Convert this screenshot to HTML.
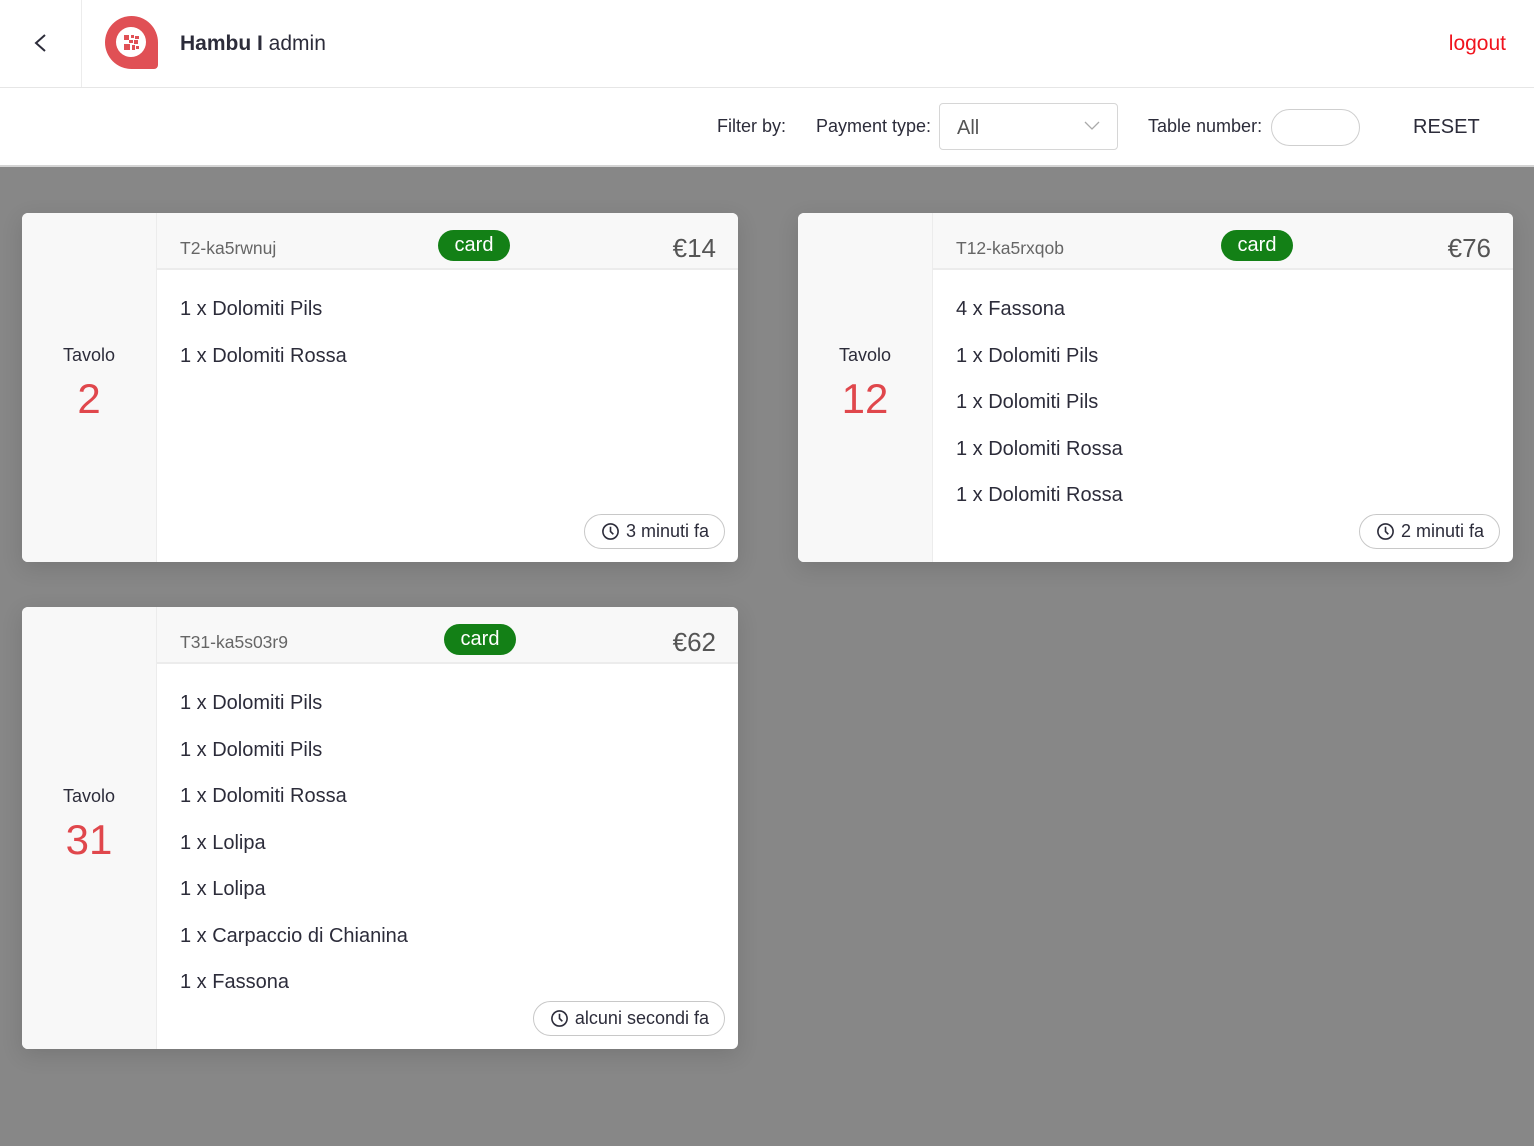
<!DOCTYPE html>
<html><head><meta charset="utf-8"><style>
*{margin:0;padding:0;box-sizing:border-box}
body{width:1534px;height:1146px;background:#878787;font-family:"Liberation Sans",Arial,sans-serif;color:#2c2c3a;position:relative;overflow:hidden}
.top{position:absolute;left:0;top:0;width:1534px;height:88px;background:#fff;border-bottom:1px solid #e6e6e6}
.back{position:absolute;left:0;top:0;width:82px;height:87px;border-right:1px solid #ececec}
.logo{position:absolute;left:105px;top:16px;width:53px;height:53px;background:#e05055;border-radius:50% 50% 4px 50%}
.logo i{position:absolute;left:11px;top:11px;width:30px;height:30px;background:#fff;border-radius:50%}
.title{position:absolute;left:180px;top:32px;font-size:21px;color:#2c2c3a}
.logout{position:absolute;right:28px;top:32px;font-size:21px;color:#f0141e}
.fbar{position:absolute;left:0;top:88px;width:1534px;height:79px;background:#fff;border-bottom:2px solid #d4d4d4}
.lbl{position:absolute;top:28px;font-size:18px;color:#2c2c3a}
.sel{position:absolute;left:939px;top:15px;width:179px;height:47px;border:1px solid #d6d6d6;border-radius:4px}
.sel span{position:absolute;left:17px;top:13px;font-size:20px;color:#555}
.inp{position:absolute;left:1271px;top:21px;width:89px;height:37px;border:1px solid #cfcfcf;border-radius:19px}
.card{position:absolute;background:#fff;border-radius:6px;overflow:hidden;box-shadow:0 6px 22px rgba(0,0,0,.12)}
.lc{position:absolute;left:0;top:0;bottom:0;width:135px;background:#f8f8f8;border-right:1px solid #ececec;display:flex;flex-direction:column;justify-content:center;align-items:center;padding-bottom:8px}
.lc .t{font-size:18px;color:#2c2c3a}
.lc .n{font-size:42px;color:#e0474c;margin-top:10px;line-height:46px}
.hd{position:absolute;left:135px;right:0;top:0;height:57px;background:#f8f8f8;border-bottom:2px solid #ececec}
.hd .id{position:absolute;left:23px;top:25px;font-size:17.5px;color:#666}
.hd .pr{position:absolute;right:22px;top:20px;font-size:26px;color:#555}
.badge{position:absolute;top:17px;width:72px;height:31px;background:#138016;border-radius:16px;color:#fff;font-size:20px;text-align:center;line-height:30px}
.items{position:absolute;left:158px;top:85px;font-size:20px;color:#2c2c3a}
.items div{height:46.5px}
.pill{position:absolute;right:13px;bottom:13px;height:35px;border:1px solid #c8c8c8;border-radius:18px;padding:0 15px 0 16px;font-size:18px;line-height:33px;color:#2c2c3a;display:flex;align-items:center;gap:6px}
</style></head><body>
<div class="top">
 <div class="back"><svg style="position:absolute;left:33px;top:33px" width="14" height="20" viewBox="0 0 14 20"><path d="M12 2 L3 10 L12 18" fill="none" stroke="#2c2c3a" stroke-width="2"/></svg></div>
 <div class="logo"><i></i><svg style="position:absolute;left:19px;top:19px" width="15" height="15" viewBox="0 0 15 15" fill="#e05055"><rect x="0" y="0" width="5" height="5"/><rect x="7" y="0" width="3" height="3"/><rect x="11" y="1" width="4" height="3"/><rect x="5" y="5" width="4" height="3"/><rect x="10" y="5" width="4" height="4"/><rect x="0" y="9" width="6" height="6"/><rect x="8" y="10" width="3" height="5"/><rect x="12" y="11" width="3" height="3"/></svg></div>
 <div class="title"><b>Hambu I</b> admin</div>
 <div class="logout">logout</div>
</div>
<div class="fbar">
 <div class="lbl" style="left:717px">Filter by:</div>
 <div class="lbl" style="left:816px">Payment type:</div>
 <div class="sel"><span>All</span><svg style="position:absolute;left:144px;top:17px" width="16" height="10" viewBox="0 0 16 10"><path d="M1 1 L8 8 L15 1" fill="none" stroke="#aaa" stroke-width="1.3"/></svg></div>
 <div class="lbl" style="left:1148px">Table number:</div>
 <div class="inp"></div>
 <div class="lbl" style="left:1413px;top:28px;font-size:20px">RESET</div>
</div>

<div class="card" style="left:22px;top:213px;width:716px;height:349px">
 <div class="lc"><div class="t">Tavolo</div><div class="n">2</div></div>
 <div class="hd"><div class="id">T2-ka5rwnuj</div><div class="badge" style="left:281px">card</div><div class="pr">€14</div></div>
 <div class="items"><div>1 x Dolomiti Pils</div><div>1 x Dolomiti Rossa</div></div>
 <div class="pill"><svg width="19" height="19" viewBox="0 0 20 20"><circle cx="10" cy="10" r="8" fill="none" stroke="#2c2c3a" stroke-width="1.7"/><path d="M10 5 V10 L13 13" fill="none" stroke="#2c2c3a" stroke-width="1.7"/></svg>3 minuti fa</div>
</div>

<div class="card" style="left:798px;top:213px;width:715px;height:349px">
 <div class="lc"><div class="t">Tavolo</div><div class="n">12</div></div>
 <div class="hd"><div class="id">T12-ka5rxqob</div><div class="badge" style="left:288px">card</div><div class="pr">€76</div></div>
 <div class="items"><div>4 x Fassona</div><div>1 x Dolomiti Pils</div><div>1 x Dolomiti Pils</div><div>1 x Dolomiti Rossa</div><div>1 x Dolomiti Rossa</div></div>
 <div class="pill"><svg width="19" height="19" viewBox="0 0 20 20"><circle cx="10" cy="10" r="8" fill="none" stroke="#2c2c3a" stroke-width="1.7"/><path d="M10 5 V10 L13 13" fill="none" stroke="#2c2c3a" stroke-width="1.7"/></svg>2 minuti fa</div>
</div>

<div class="card" style="left:22px;top:607px;width:716px;height:442px">
 <div class="lc"><div class="t">Tavolo</div><div class="n">31</div></div>
 <div class="hd"><div class="id">T31-ka5s03r9</div><div class="badge" style="left:287px">card</div><div class="pr">€62</div></div>
 <div class="items"><div>1 x Dolomiti Pils</div><div>1 x Dolomiti Pils</div><div>1 x Dolomiti Rossa</div><div>1 x Lolipa</div><div>1 x Lolipa</div><div>1 x Carpaccio di Chianina</div><div>1 x Fassona</div></div>
 <div class="pill"><svg width="19" height="19" viewBox="0 0 20 20"><circle cx="10" cy="10" r="8" fill="none" stroke="#2c2c3a" stroke-width="1.7"/><path d="M10 5 V10 L13 13" fill="none" stroke="#2c2c3a" stroke-width="1.7"/></svg>alcuni secondi fa</div>
</div>
</body></html>
